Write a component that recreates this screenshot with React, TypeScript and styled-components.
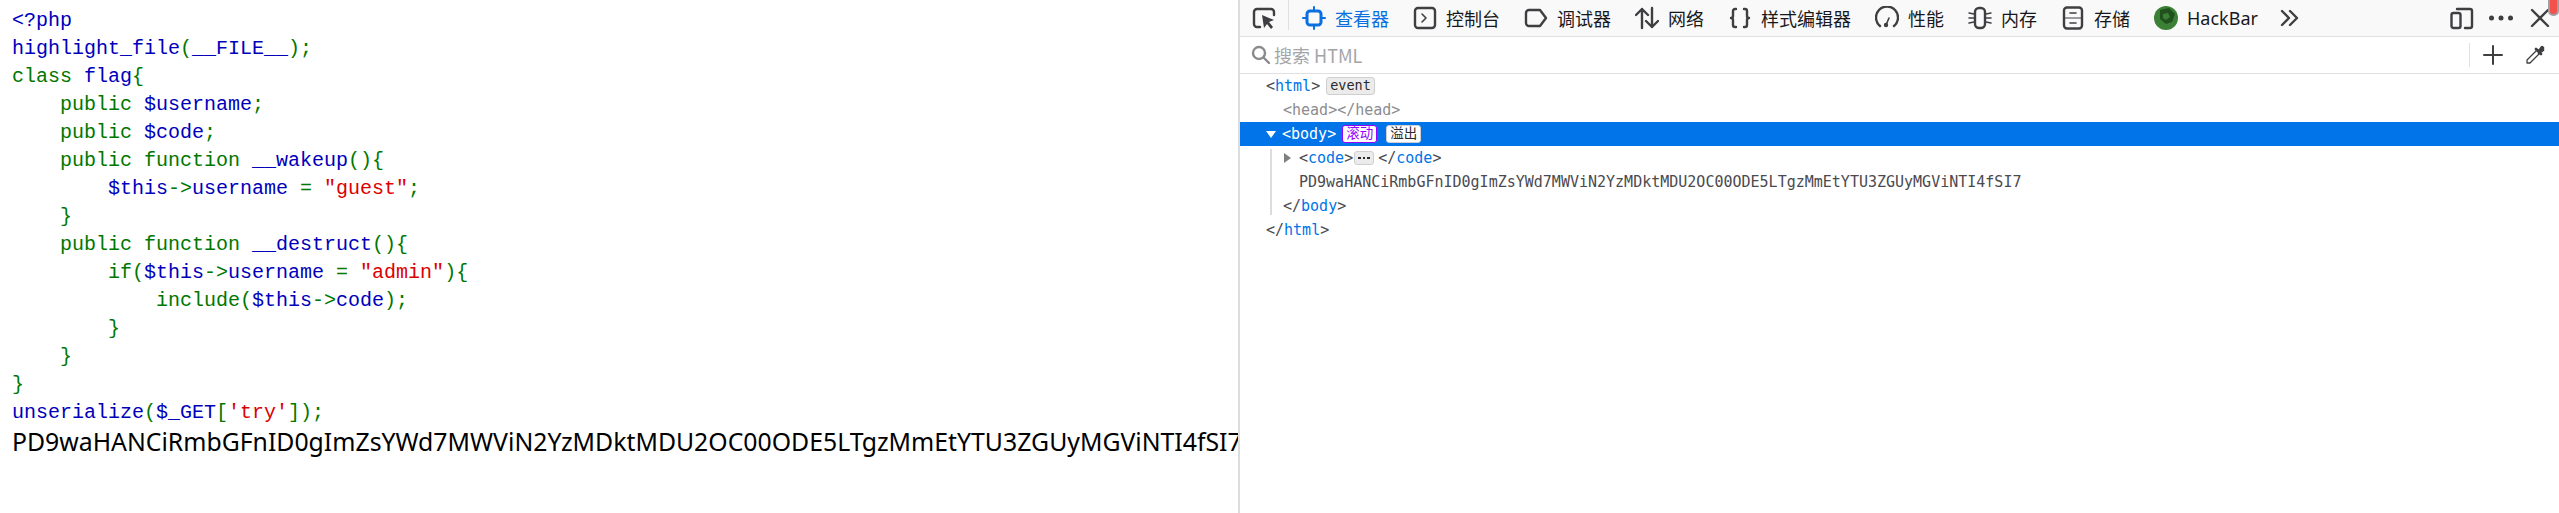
import React from "react";
import styled, { createGlobalStyle } from "styled-components";

const GlobalStyle = createGlobalStyle`
  html, body {
    margin: 0;
    padding: 0;
    background: #fff;
    overflow: hidden;
  }
`;

const Page = styled.div`
  display: grid;
  grid-template-columns: 1238px 1fr;
  width: 2559px;
  height: 513px;
  overflow: hidden;
`;

/* left: the page being inspected */
const Preview = styled.div`
  padding: 7px 0 0 12px;
  overflow: hidden;
  background: #fff;
`;

const CodeBlock = styled.code`
  display: block;
  font-family: "Liberation Mono", monospace;
  font-size: 20px;
  line-height: 28px;
  white-space: pre;
`;

const Kw = styled.span`
  color: #007700;
`;

const Def = styled.span`
  color: #0000bb;
`;

const Str = styled.span`
  color: #dd0000;
`;

const Output = styled.div`
  font-family: "Noto Sans", sans-serif;
  font-size: 24.8px;
  line-height: 29px;
  color: #000;
  white-space: nowrap;
`;

/* right: devtools pane */
const Devtools = styled.div`
  position: relative;
  display: flex;
  flex-direction: column;
  border-left: 2px solid #dcdcdc;
  background: #fff;
  min-width: 0;
`;

const Toolbar = styled.div`
  display: flex;
  align-items: center;
  height: 37px;
  padding: 0 7px 0 12px;
  box-sizing: border-box;
  background: #f9f9fa;
  border-bottom: 1px solid #e0e0e2;
  font-family: "Noto Sans CJK SC", "Noto Sans", sans-serif;
  font-size: 18px;
  color: #18181a;
`;

const Separator = styled.div`
  align-self: flex-start;
  width: 1px;
  height: 30px;
  margin: 0 13px 0 12px;
  background: #e0e0e2;
`;

const Tabs = styled.div`
  display: flex;
  align-items: center;
  gap: 24px;
`;

const Tab = styled.div<{ $active?: boolean }>`
  display: flex;
  align-items: center;
  gap: 9px;
  color: ${(p) => (p.$active ? "#0a6fe0" : "#18181a")};
  white-space: nowrap;
`;

const LatinLabel = styled.span`
  font-family: "Noto Sans", sans-serif;
`;

const Icon = styled.svg<{ $tint?: string }>`
  display: block;
  flex: none;
  width: 24px;
  height: 24px;
  fill: none;
  stroke: ${(p) => p.$tint || "#3f3f42"};
  stroke-width: 2.4;
  stroke-linecap: round;
  stroke-linejoin: round;
`;

const SmallIcon = styled(Icon)`
  width: 20px;
  height: 20px;
`;

const OverflowIcon = styled(Icon)`
  margin-left: 20px;
`;

const Actions = styled.div`
  display: flex;
  align-items: center;
  gap: 15px;
  margin-left: auto;
`;

const ScrollMark = styled.div`
  position: absolute;
  top: -6px;
  right: 0;
  width: 7px;
  height: 18px;
  border: 2px solid #a0a0a0;
  border-radius: 5px;
  background: #f4504c;
`;

const SearchRow = styled.div`
  display: flex;
  align-items: center;
  height: 37px;
  padding: 0 14px 0 11px;
  box-sizing: border-box;
  border-bottom: 1px solid #e0e0e2;
  font-family: "Noto Sans CJK SC", "Noto Sans", sans-serif;
  font-size: 18px;
  color: #a5a5a8;
`;

const SearchLabel = styled.span`
  margin-left: 3px;
  flex: 1;
`;

const SearchTools = styled.div`
  display: flex;
  align-items: center;
  gap: 22px;
  height: 24px;
  padding-left: 13px;
  border-left: 1px solid #e0e0e2;
`;

const Tree = styled.div`
  font-family: "DejaVu Sans Mono", monospace;
  font-size: 15px;
  color: #4a4a4f;
`;

const Row = styled.div<{ $indent: number; $selected?: boolean }>`
  display: flex;
  align-items: center;
  height: 24px;
  padding-left: ${(p) => p.$indent}px;
  white-space: pre;
  background: ${(p) => (p.$selected ? "#0074e8" : "transparent")};
  color: ${(p) => (p.$selected ? "#fff" : "inherit")};
`;

const Name = styled.span`
  color: #0074e8;
`;

const Muted = styled.span`
  color: #8c8c90;
`;

const Twisty = styled.span<{ $open?: boolean }>`
  flex: none;
  width: 0;
  height: 0;
  ${(p) =>
    p.$open
      ? `margin-right: 6px;
         border-left: 5.5px solid transparent;
         border-right: 5.5px solid transparent;
         border-top: 7px solid #fff;`
      : `margin: 0 8px 0 1px;
         border-top: 5.5px solid transparent;
         border-bottom: 5.5px solid transparent;
         border-left: 7px solid #808083;`}
`;

const Badge = styled.span<{ $kind?: "scroll" | "plain" }>`
  display: inline-flex;
  align-items: center;
  justify-content: center;
  box-sizing: border-box;
  height: 18px;
  margin-left: 6px;
  padding: 0 3px;
  border-radius: 3px;
  font-size: 13.5px;
  line-height: 1;
  font-family: "DejaVu Sans Mono", "Noto Sans CJK SC", monospace;
  border: 1px solid
    ${(p) => (p.$kind === "scroll" ? "#9400ff" : "#cfcfd1")};
  background: ${(p) => (p.$kind ? "#fff" : "#ebebeb")};
  color: ${(p) => (p.$kind === "scroll" ? "#9400ff" : "#2a2a2e")};

  & + & {
    margin-left: 9px;
  }
`;

const Ellipsis = styled.span`
  display: inline-flex;
  align-items: center;
  justify-content: center;
  gap: 2px;
  box-sizing: border-box;
  width: 20px;
  height: 14px;
  margin: 0 4px 0 1px;
  border: 1px solid #cfcfd1;
  border-radius: 3px;
  background: #ebebeb;
`;

const Dot = styled.i`
  width: 2.5px;
  height: 2.5px;
  background: #2a2a2e;
`;

const Nested = styled.div`
  position: relative;

  &::before {
    content: "";
    position: absolute;
    top: 3px;
    bottom: 3px;
    left: 30px;
    width: 2px;
    background: #dcdcdc;
  }
`;

const OUTPUT =
  "PD9waHANCiRmbGFnID0gImZsYWd7MWViN2YzMDktMDU2OC00ODE5LTgzMmEtYTU3ZGUyMGViNTI4fSI7";

const Source = () => (
  <CodeBlock>
    <Def>{"<?php"}</Def>
    {"\n"}
    <Def>highlight_file</Def><Kw>(</Kw><Def>__FILE__</Def><Kw>);</Kw>
    {"\n"}
    <Kw>class </Kw><Def>flag</Def><Kw>{"{"}</Kw>
    {"\n"}
    <Kw>{"    public "}</Kw><Def>$username</Def><Kw>;</Kw>
    {"\n"}
    <Kw>{"    public "}</Kw><Def>$code</Def><Kw>;</Kw>
    {"\n"}
    <Kw>{"    public function "}</Kw><Def>__wakeup</Def><Kw>(){"{"}</Kw>
    {"\n"}
    <Def>{"        $this"}</Def><Kw>{"->"}</Kw><Def>username </Def><Kw>= </Kw><Str>"guest"</Str><Kw>;</Kw>
    {"\n"}
    <Kw>{"    }"}</Kw>
    {"\n"}
    <Kw>{"    public function "}</Kw><Def>__destruct</Def><Kw>(){"{"}</Kw>
    {"\n"}
    <Kw>{"        if("}</Kw><Def>$this</Def><Kw>{"->"}</Kw><Def>username </Def><Kw>= </Kw><Str>"admin"</Str><Kw>){"{"}</Kw>
    {"\n"}
    <Kw>{"            include("}</Kw><Def>$this</Def><Kw>{"->"}</Kw><Def>code</Def><Kw>);</Kw>
    {"\n"}
    <Kw>{"        }"}</Kw>
    {"\n"}
    <Kw>{"    }"}</Kw>
    {"\n"}
    <Kw>{"}"}</Kw>
    {"\n"}
    <Def>unserialize</Def><Kw>(</Kw><Def>$_GET</Def><Kw>[</Kw><Str>'try'</Str><Kw>]);</Kw>
  </CodeBlock>
);

const App = () => (
  <>
    <GlobalStyle />
    <Page>
      <Preview>
        <Source />
        <Output>{OUTPUT}</Output>
      </Preview>

      <Devtools>
        <Toolbar>
          <Icon viewBox="0 0 24 24">
            <path d="M8 21H5a3 3 0 0 1-3-3V6a3 3 0 0 1 3-3h14a3 3 0 0 1 3 3v3" />
            <path d="M10 9l12 5-5 2 4 5-2 2-4-5-3 4z" fill="#3f3f42" stroke="none" />
          </Icon>
          <Separator />
          <Tabs>
            <Tab $active>
              <Icon viewBox="0 0 24 24" $tint="#0a6fe0">
                <rect x="5" y="5" width="14" height="14" rx="3" strokeWidth="3" />
                <path d="M12 1v3M12 20v3M1 12h3M20 12h3" strokeWidth="2" />
              </Icon>
              查看器
            </Tab>
            <Tab>
              <Icon viewBox="0 0 24 24">
                <rect x="2" y="2" width="20" height="20" rx="3" />
                <path d="M9 8l4 4-4 4" strokeWidth="1.6" />
              </Icon>
              控制台
            </Tab>
            <Tab>
              <Icon viewBox="0 0 24 24">
                <path d="M5 4h11l6 8-6 8H5a3 3 0 0 1-3-3V7a3 3 0 0 1 3-3z" />
              </Icon>
              调试器
            </Tab>
            <Tab>
              <Icon viewBox="0 0 24 24">
                <path d="M7 22V3M1 9l6-6 6 6M17 2v19M11 15l6 6 6-6" />
              </Icon>
              网络
            </Tab>
            <Tab>
              <Icon viewBox="0 0 24 24">
                <path d="M8 3H7a2 2 0 0 0-2 2v5a2 2 0 0 1-2 2 2 2 0 0 1 2 2v5a2 2 0 0 0 2 2h1" />
                <path d="M16 3h1a2 2 0 0 1 2 2v5a2 2 0 0 0 2 2 2 2 0 0 0-2 2v5a2 2 0 0 1-2 2h-1" />
              </Icon>
              样式编辑器
            </Tab>
            <Tab>
              <Icon viewBox="0 0 24 24">
                <path d="M5 20a11 11 0 1 1 14 0" />
                <path d="M11 19l3-7" strokeWidth="1.6" />
                <circle cx="11" cy="19" r="2.2" fill="#3f3f42" stroke="none" />
              </Icon>
              性能
            </Tab>
            <Tab>
              <Icon viewBox="0 0 24 24">
                <rect x="7" y="2" width="10" height="20" rx="4" />
                <path d="M1 7l5 1M1 12h5M1 17l5-1M18 8l5-1M18 12h5M18 16l5 1" strokeWidth="1.5" />
              </Icon>
              内存
            </Tab>
            <Tab>
              <Icon viewBox="0 0 24 24">
                <rect x="3" y="1.5" width="18" height="21" rx="3" />
                <path d="M3 12h18" strokeWidth="1" />
                <path d="M9 7h6M9 17h6" strokeWidth="1.6" />
              </Icon>
              存储
            </Tab>
            <Tab>
              <Icon viewBox="0 0 24 24" $tint="none">
                <circle cx="12" cy="12" r="12" fill="#3c8035" />
                <path d="M6 4l9-2 6 6-3 8-6 2-6-5z" fill="#20511c" />
                <path d="M9 8l5-1 2 4-4 3-3-2z" fill="#3c8035" />
              </Icon>
              <LatinLabel>HackBar</LatinLabel>
            </Tab>
          </Tabs>
          <OverflowIcon viewBox="0 0 24 24">
            <path d="M4 5l7 7-7 7M12 5l7 7-7 7" />
          </OverflowIcon>
          <Actions>
            <Icon viewBox="0 0 24 24">
              <rect x="1.5" y="7" width="9" height="15" rx="2" />
              <path d="M7 3h13a2 2 0 0 1 2 2v15a2 2 0 0 1-2 2h-5" />
            </Icon>
            <Icon viewBox="0 0 24 24">
              <circle cx="2.5" cy="12" r="2.5" fill="#3f3f42" stroke="none" />
              <circle cx="12" cy="12" r="2.5" fill="#3f3f42" stroke="none" />
              <circle cx="21.5" cy="12" r="2.5" fill="#3f3f42" stroke="none" />
            </Icon>
            <Icon viewBox="0 0 24 24">
              <path d="M4 4l16 16M20 4L4 20" />
            </Icon>
          </Actions>
          <ScrollMark />
        </Toolbar>

        <SearchRow>
          <SmallIcon viewBox="0 0 20 20" $tint="#8a8a8d">
            <circle cx="8" cy="8" r="6" />
            <path d="M12.5 12.5L18 18" />
          </SmallIcon>
          <SearchLabel>搜索 HTML</SearchLabel>
          <SearchTools>
            <SmallIcon viewBox="0 0 20 20">
              <path d="M10 1v18M1 10h18" strokeWidth="2" />
            </SmallIcon>
            <SmallIcon viewBox="0 0 20 20">
              <path d="M12 5L2 15v3h3L15 8" strokeWidth="1.3" />
              <path d="M11 4l5 5M14 6l3-4 1 1-1 1 1 1-4 3" strokeWidth="2.6" />
            </SmallIcon>
          </SearchTools>
        </SearchRow>

        <Tree>
          <Row $indent={26}>
            {"<"}<Name>html</Name>{">"}
            <Badge>event</Badge>
          </Row>
          <Row $indent={43}>
            <Muted>{"<head></head>"}</Muted>
          </Row>
          <Row $indent={26} $selected>
            <Twisty $open />
            {"<body>"}
            <Badge $kind="scroll">滚动</Badge>
            <Badge $kind="plain">溢出</Badge>
          </Row>
          <Nested>
            <Row $indent={43}>
              <Twisty />
              {"<"}<Name>code</Name>{">"}
              <Ellipsis>
                <Dot />
                <Dot />
                <Dot />
              </Ellipsis>
              {"</"}<Name>code</Name>{">"}
            </Row>
            <Row $indent={59}>{OUTPUT}</Row>
            <Row $indent={43}>
              {"</"}<Name>body</Name>{">"}
            </Row>
          </Nested>
          <Row $indent={26}>
            {"</"}<Name>html</Name>{">"}
          </Row>
        </Tree>
      </Devtools>
    </Page>
  </>
);

export default App;
